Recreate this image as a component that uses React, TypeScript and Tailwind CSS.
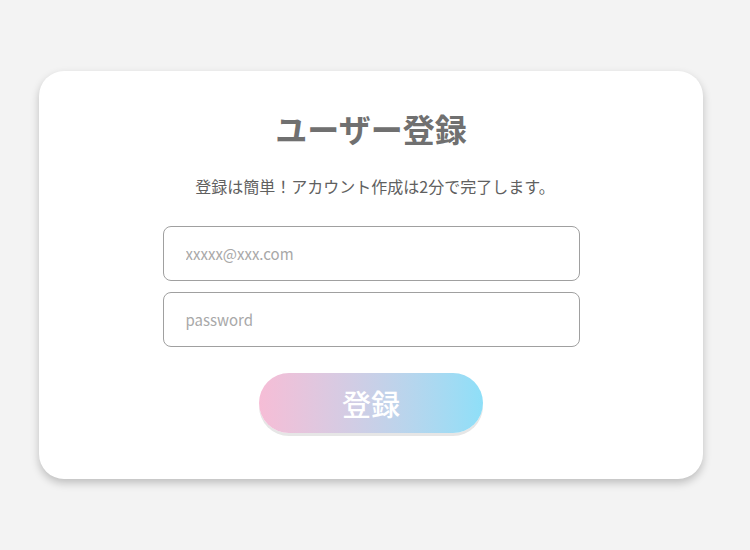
export default function App() {
  return (
    <div
      className="min-h-[550px] bg-[#f3f3f3] flex items-center"
      style={{ fontFamily: '"Noto Sans CJK JP", "Noto Sans", sans-serif' }}
    >
      <div className="ml-[39px] w-[664px] h-[408px] bg-white rounded-[25px] shadow-[0_4px_8px_rgba(0,0,0,0.22)] flex flex-col items-center pt-[37px]">
        <h1 className="text-[32px] leading-[40px] font-bold text-[#707070]">ユーザー登録</h1>
        <p className="mt-[26px] pl-[8px] text-[16px] leading-[24px] text-[#606060]">
          登録は簡単！アカウント作成は2分で完了します。
        </p>
        <div className="mt-[28px] flex flex-col gap-[11px]">
          <input
            type="email"
            placeholder="xxxxx@xxx.com"
            className="w-[417px] h-[55px] rounded-[8px] border border-[#a0a0a0] px-[22px] text-[15px] text-[#555] placeholder:text-[#a8a8a8] outline-none"
          />
          <input
            type="password"
            placeholder="password"
            className="w-[417px] h-[55px] rounded-[8px] border border-[#a0a0a0] px-[22px] text-[15px] text-[#555] placeholder:text-[#a8a8a8] outline-none"
          />
        </div>
        <button
          type="button"
          className="mt-[26px] w-[224px] h-[60px] rounded-full bg-linear-to-r from-[#f6bdd6] to-[#8edff8] shadow-[0_3px_0_#e6e6e6] text-white text-[29px] font-medium leading-none"
        >
          登録
        </button>
      </div>
    </div>
  )
}
